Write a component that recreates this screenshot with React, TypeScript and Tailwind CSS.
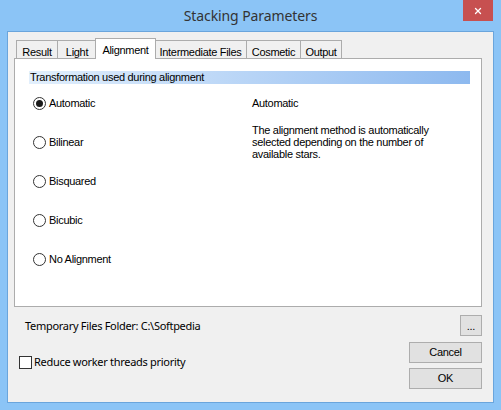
import { X } from "lucide-react";

const tabs = ["Result", "Light", "Alignment", "Intermediate Files", "Cosmetic", "Output"];
const methods = ["Automatic", "Bilinear", "Bisquared", "Bicubic", "No Alignment"];

function Radio({ checked }: { checked?: boolean }) {
  return (
    <div className="w-[13px] h-[13px] rounded-full border border-[#333333] bg-white flex items-center justify-center">
      {checked && <div className="w-[7px] h-[7px] rounded-full bg-[#1a1a1a]" />}
    </div>
  );
}

export default function App() {
  const win = "font-['Liberation_Sans',Arial,sans-serif] text-[11px] tracking-[-0.3px] text-black";
  const seg = "font-['Noto_Sans','Liberation_Sans',sans-serif] text-[11px] tracking-[-0.3px] text-black";

  return (
    <div className="w-[501px] h-[410px] bg-[#8bc4f6] flex flex-col relative">
      {/* title bar */}
      <div className="h-[31px] flex items-center justify-center">
        <span className="font-['Noto_Sans',sans-serif] text-[14px] tracking-[-0.1px] text-[#333333] -mt-[1px]">Stacking Parameters</span>
      </div>
      <button className="absolute top-0 left-[463px] w-[30px] h-[21px] bg-[#c75050] flex items-center justify-center">
        <X className="w-[10px] h-[10px] text-white" strokeWidth={3} />
      </button>

      {/* client */}
      <div className="ml-[7px] w-[487px] h-[372px] border border-[#6aa5dc] bg-[#f0f0f0] pl-[6px] pt-[5px] flex flex-col">
        {/* tabs */}
        <div className={`flex items-end h-[21px] ml-[2px] ${win}`}>
          {tabs.map((t) => {
            const sel = t === "Alignment";
            const widths: Record<string, string> = {
              Result: "w-[42px]",
              Light: "w-[40px]",
              Alignment: "w-[61px]",
              "Intermediate Files": "w-[93px]",
              Cosmetic: "w-[55px]",
              Output: "w-[42px]",
            };
            return sel ? (
              <div
                key={t}
                className={`${widths[t]} -ml-[2px] -mr-[1px] h-[21px] -mb-[1px] bg-white border border-b-0 border-[#acacac] flex items-start justify-center pt-[3px] relative z-10`}
              >
                {t}
              </div>
            ) : (
              <div
                key={t}
                className={`${widths[t]} h-[18px] -ml-[1px] first:ml-0 bg-[#f0f0f0] border border-b-0 border-[#acacac] flex items-start justify-center pt-[3px]`}
              >
                {t}
              </div>
            );
          })}
        </div>

        {/* panel */}
        <div className="w-[468px] h-[249px] bg-white border border-[#acacac] pt-[12px] pl-[14px] relative">
          <div className={`w-[441px] h-[13px] bg-gradient-to-r from-[#e2effc] to-[#8db9ef] flex items-center pl-[1px] ${win}`}>
            Transformation used during alignment
          </div>
          <div className="flex">
            <div className="w-[223px] flex flex-col pl-[4px]">
              {methods.map((m, i) => (
                <div key={m} className={`h-[39px] flex items-center gap-[3px] ${win}`}>
                  <Radio checked={i === 0} />
                  <span>{m}</span>
                </div>
              ))}
            </div>
            <div className={`flex flex-col pt-[13px] ${win}`}>
              <div className="leading-[13px]">Automatic</div>
              <div className="mt-[14px] leading-[12px] w-[185px]">
                The alignment method is automatically selected depending on the number of available stars.
              </div>
            </div>
          </div>
        </div>

        {/* bottom */}
        <div className="flex justify-between pr-[11px]">
          <div className="flex flex-col">
            <div className={`ml-[11px] mt-[12px] leading-[14px] ${seg}`}>Temporary Files Folder: C:\Softpedia</div>
            <div className="ml-[5px] mt-[21px] flex items-center gap-[2px]">
              <div className="w-[13px] h-[13px] border border-[#333333] bg-white" />
              <span className={seg}>Reduce worker threads priority</span>
            </div>
          </div>
          <div className={`flex flex-col items-end ${win}`}>
            <button className="mt-[8px] w-[22px] h-[21px] bg-[#e1e1e1] border border-[#adadad] flex items-end justify-center pb-[3px] leading-none">
              ...
            </button>
            <button className="mt-[6px] w-[73px] h-[21px] bg-[#e1e1e1] border border-[#adadad] flex items-center justify-center">
              Cancel
            </button>
            <button className="mt-[5px] w-[73px] h-[21px] bg-[#e1e1e1] border border-[#adadad] flex items-center justify-center">
              OK
            </button>
          </div>
        </div>
      </div>
    </div>
  );
}
